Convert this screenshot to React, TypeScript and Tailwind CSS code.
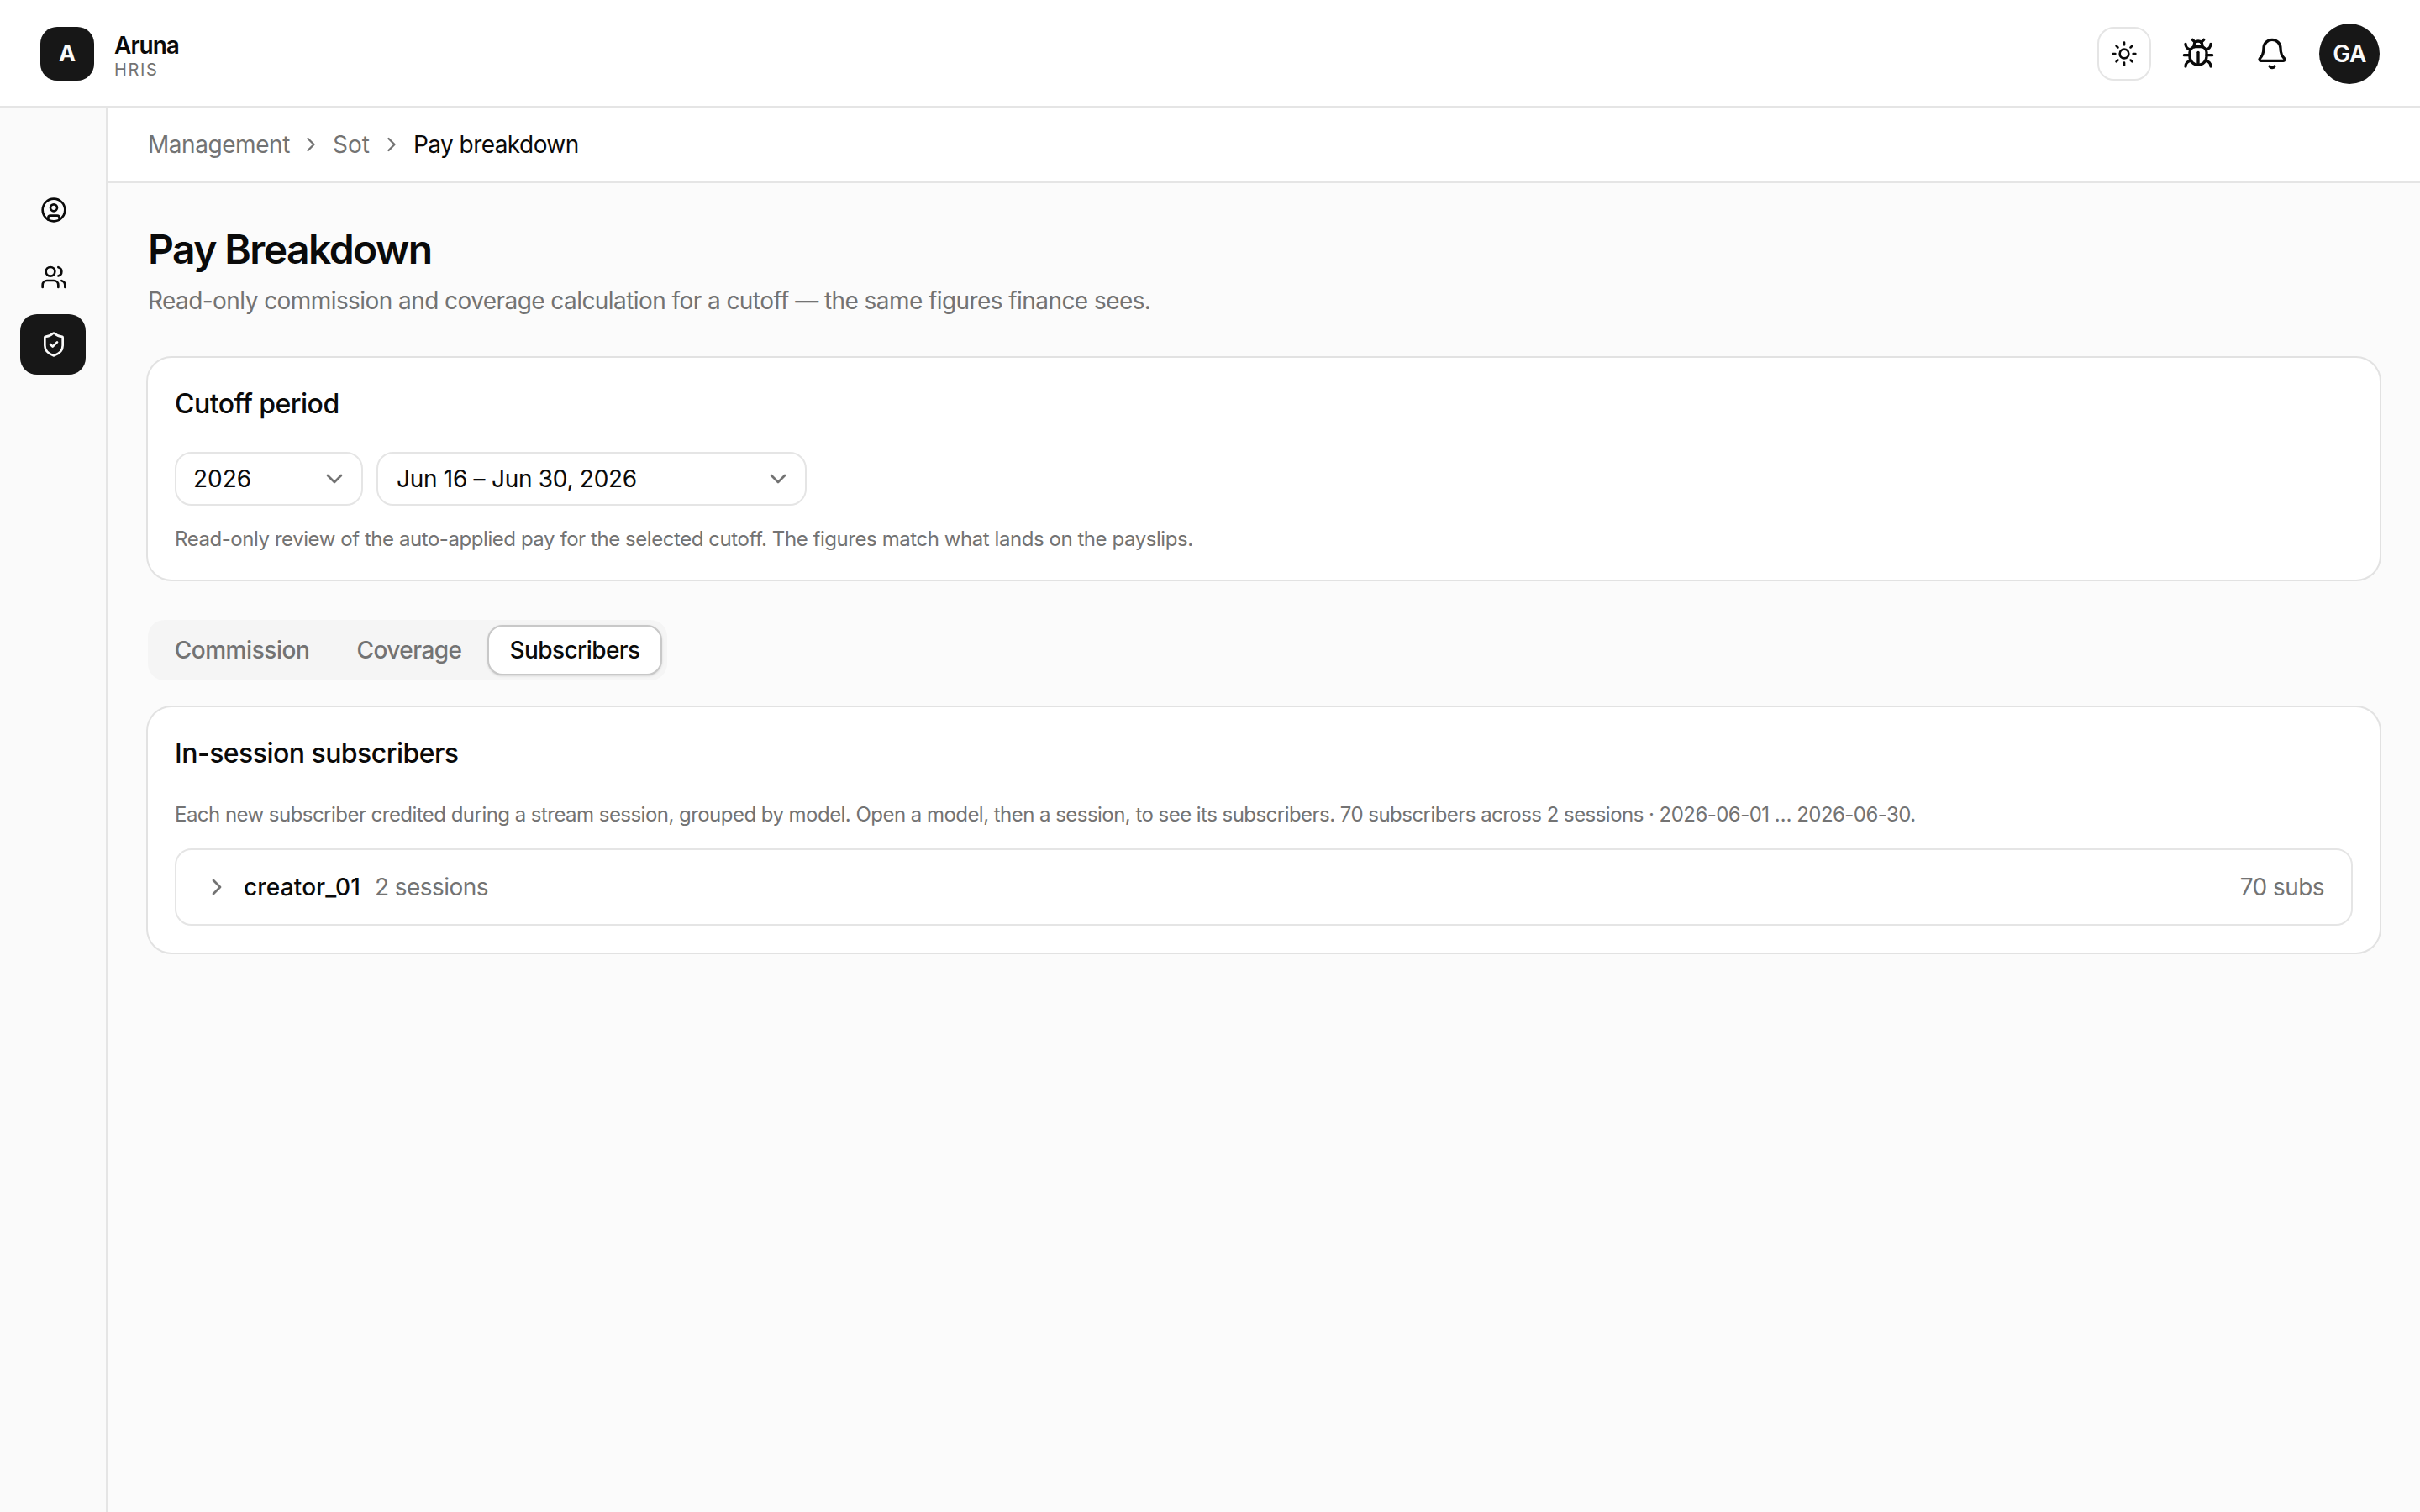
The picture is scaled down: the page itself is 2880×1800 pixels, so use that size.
import { Bell, Bug, ChevronDown, ChevronRight, CircleUser, ShieldCheck, Sun, Users } from "lucide-react";
import clsx from "clsx";

const navItems = [
  { name: "Profile", icon: CircleUser },
  { name: "People", icon: Users },
  { name: "Management", icon: ShieldCheck, active: true },
];

const tabs = [
  { name: "Commission", className: "w-[212px] tracking-[-0.016em]" },
  { name: "Coverage", className: "w-[178px] tracking-[-0.02em]" },
  { name: "Subscribers", className: "w-[208px] tracking-[-0.02em]", active: true },
];

function Header() {
  return (
    <header className="flex h-32 shrink-0 items-center justify-between border-b-2 border-[#e5e5e5] bg-white px-12 pt-0.5">
      <div className="flex items-center gap-6">
        <div className="grid size-16 place-items-center rounded-[20px] bg-[#171717] text-[27px] font-bold text-[#fafafa]">A</div>
        <div className="pt-0.5">
          <p className="text-[28px] leading-9 font-semibold tracking-[-0.035em]">Aruna</p>
          <p className="text-[20px] leading-[22px] tracking-[0.08em] text-[#737373]">HRIS</p>
        </div>
      </div>
      <div className="flex items-center">
        <button title="Theme" className="grid size-16 place-items-center rounded-[20px] border-2 border-[#e5e5e5]">
          <Sun size={32} />
        </button>
        <button title="Report a bug" className="ml-6 grid size-16 place-items-center">
          <Bug size={40} />
        </button>
        <button title="Notifications" className="ml-6 grid size-16 place-items-center">
          <Bell size={40} />
        </button>
        <div className="ml-6 grid size-[72px] place-items-center rounded-full bg-[#171717] text-[28px] font-semibold tracking-[-0.02em] text-[#fafafa]">GA</div>
      </div>
    </header>
  );
}

function Sidebar() {
  return (
    <nav className="flex w-32 shrink-0 flex-col gap-2 border-r-2 border-[#e5e5e5] bg-[#fafafa] px-6 pt-[86px]">
      {navItems.map(({ name, icon: Icon, active }) => (
        <a
          key={name}
          title={name}
          className={clsx("flex h-[72px] w-[78px] items-center rounded-[20px] pl-6", active && "bg-[#171717] text-[#fafafa]")}
        >
          <Icon size={32} />
        </a>
      ))}
    </nav>
  );
}

function Breadcrumb() {
  return (
    <div className="flex h-[90px] items-center border-b-2 border-[#e5e5e5] bg-white px-12 text-[28px] text-[#737373]">
      <span className="w-[180px] tracking-[-0.016em]">Management</span>
      <ChevronRight size={28} />
      <span className="ml-3 w-[56px]">Sot</span>
      <ChevronRight size={28} />
      <span className="ml-3 tracking-[-0.02em] text-[#0a0a0a]">Pay breakdown</span>
    </div>
  );
}

function Card({ title, children }: { title: string; children: React.ReactNode }) {
  return (
    <section className="rounded-[28px] bg-white p-8 ring-2 ring-[#0a0a0a]/10">
      <h2 className="mb-[34px] text-[32px] leading-[46px] font-medium tracking-[-0.017em]">{title}</h2>
      {children}
    </section>
  );
}

function Select({ value, className }: { value: string; className?: string }) {
  return (
    <button className={clsx(className, "flex h-16 items-center justify-between rounded-[20px] border-2 border-[#e5e5e5] pr-4 text-[28px]")}>
      {value}
      <ChevronDown size={32} className="text-[#737373]" />
    </button>
  );
}

export default function App() {
  return (
    <div className="flex h-[1800px] w-[2880px] flex-col overflow-hidden bg-[#fbfbfb] font-['Inter',sans-serif] text-[#0a0a0a]">
      <Header />
      <div className="flex flex-1">
        <Sidebar />
        <div className="flex-1">
          <Breadcrumb />
          <main className="p-12">
            <h1 className="text-[48px] leading-[62px] font-semibold tracking-[-0.033em]">Pay Breakdown</h1>
            <p className="mt-2.5 mb-12 text-[28px] leading-10 tracking-[-0.0203em] text-[#737373]">
              Read-only commission and coverage calculation for a cutoff — the same figures finance sees.
            </p>

            <Card title="Cutoff period">
              <div className="flex gap-4">
                <Select value="2026" className="w-56 pl-5" />
                <Select value="Jun 16 – Jun 30, 2026" className="w-[512px] pl-[22px] tracking-[-0.01em]" />
              </div>
              <p className="mt-6 text-[24px] leading-8 tracking-[-0.0183em] text-[#737373]">
                Read-only review of the auto-applied pay for the selected cutoff. The figures match what lands on the payslips.
              </p>
            </Card>

            <div className="mt-12 mb-8 flex h-[72px] w-fit items-center gap-1 rounded-[20px] bg-[#f5f5f5] p-1.5 text-[28px] font-medium text-[#737373]">
              {tabs.map((tab) => (
                <button
                  key={tab.name}
                  className={clsx(
                    "h-[60px] rounded-[18px] border-2 text-center",
                    tab.className,
                    tab.active ? "border-[#c8c8c8] bg-white text-[#0a0a0a] shadow-sm" : "border-transparent"
                  )}
                >
                  {tab.name}
                </button>
              ))}
            </div>

            <Card title="In-session subscribers">
              <p className="mb-6 text-[24px] leading-8 tracking-[-0.0223em] text-[#737373]">
                Each new subscriber credited during a stream session, grouped by model. Open a model, then a session, to see its subscribers. 70 subscribers across 2 sessions · 2026-06-01 … 2026-06-30.
              </p>
              <div className="flex h-[92px] items-center rounded-[20px] border-2 border-[#e5e5e5] px-8 text-[28px] tracking-[-0.02em] text-[#737373]">
                <ChevronRight size={32} />
                <span className="ml-4 w-[156px] font-medium tracking-[0.006em] text-[#0a0a0a]">creator_01</span>
                <span>2 sessions</span>
                <span className="ml-auto">70 subs</span>
              </div>
            </Card>
          </main>
        </div>
      </div>
    </div>
  );
}
